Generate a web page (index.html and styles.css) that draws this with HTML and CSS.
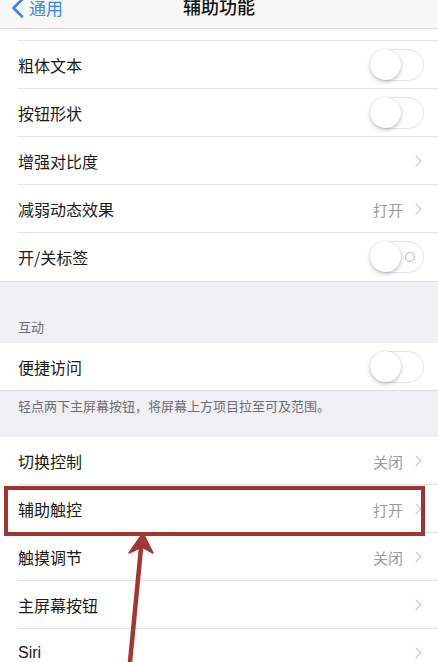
FILE: index.html
```html
<!DOCTYPE html>
<html lang="zh">
<head>
<meta charset="utf-8">
<link rel="stylesheet" href="styles.css">
</head>
<body>
<div class="screen">
  <header class="nav">
    <div class="back">
      <svg class="back-chev" width="13" height="20" viewBox="0 0 13 20"><path d="M11 1.5 L2.5 10 L11 18.5" fill="none" stroke="#3b84f0" stroke-width="2.6" stroke-linecap="round" stroke-linejoin="round"/></svg>
      <span>通用</span>
    </div>
    <div class="title">辅助功能</div>
  </header>

  <section class="group">
    <div class="row stub"></div>
    <div class="row"><span class="label">粗体文本</span><span class="toggle"><span class="knob"></span></span></div>
    <div class="row"><span class="label">按钮形状</span><span class="toggle"><span class="knob"></span></span></div>
    <div class="row"><span class="label">增强对比度</span><span class="chev"></span></div>
    <div class="row"><span class="label">减弱动态效果</span><span class="value">打开</span><span class="chev"></span></div>
    <div class="row last"><span class="label">开/关标签</span><span class="toggle labeled"><span class="knob"></span><span class="ring"></span></span></div>
  </section>

  <div class="sec-head">互动</div>
  <section class="group">
    <div class="row single last"><span class="label">便捷访问</span><span class="toggle"><span class="knob"></span></span></div>
  </section>
  <div class="sec-foot">轻点两下主屏幕按钮，将屏幕上方项目拉至可及范围。</div>

  <section class="group">
    <div class="row"><span class="label">切换控制</span><span class="value">关闭</span><span class="chev"></span></div>
    <div class="row"><span class="label">辅助触控</span><span class="value">打开</span><span class="chev"></span></div>
    <div class="row"><span class="label">触摸调节</span><span class="value">关闭</span><span class="chev"></span></div>
    <div class="row"><span class="label">主屏幕按钮</span><span class="chev"></span></div>
    <div class="row last"><span class="label latin">Siri</span><span class="chev"></span></div>
  </section>

  <div class="highlight"></div>
  <svg class="arrow" width="50" height="140" viewBox="0 0 50 140">
    <path d="M10 132 L21 18" stroke="#a23833" stroke-width="4.5" stroke-linecap="round" fill="none"/>
    <path d="M23 3 L33 23 L22 17 L9 23 Z" fill="#a23833" stroke="#a23833" stroke-width="1.5" stroke-linejoin="round"/>
  </svg>
</div>
</body>
</html>
```
FILE: styles.css
```css
* { box-sizing: border-box; }
html, body { margin: 0; padding: 0; }
body {
  background: #efeff4;
  font-family: "Noto Sans CJK SC", "Noto Sans", sans-serif;
  color: #111;
}
.screen {
  position: relative;
  width: 438px;
  height: 662px;
  overflow: hidden;
  background: #efeff4;
}
.nav {
  height: 29px;
  background: #f7f7f8;
  border-bottom: 1px solid #d9d9dc;
  display: flex;
  align-items: flex-start;
  position: relative;
}
.back {
  display: flex;
  align-items: center;
  gap: 5px;
  color: #3b84f0;
  font-size: 17px;
  line-height: 18px;
  margin-top: -3px;
  padding-left: 11px;
}
.back-chev { margin-top: 1px; }
.title {
  position: absolute;
  left: 0; right: 0;
  top: -5px;
  text-align: center;
  font-size: 18px;
  line-height: 22px;
  color: #111;
  font-weight: 500;
}
.group {
  background: #fff;
  border-bottom: 1px solid #dcdce0;
}
.row {
  height: 48px;
  display: flex;
  align-items: center;
  padding: 0 14px 0 18px;
  position: relative;
}
.row.single { height: 47px; }
.row::after {
  content: "";
  position: absolute;
  left: 18px; right: 0; bottom: 0;
  height: 1px;
  background: #e2e2e6;
}
.row.last::after { display: none; }
.row.stub { height: 12px; }
.label {
  flex: 1;
  font-size: 16px;
  color: #1a1a1a;
}
.label.latin { font-family: "Liberation Sans", "Noto Sans", sans-serif; font-size: 16px; }
.value {
  font-size: 15px;
  color: #9a9a9f;
  margin-right: 9px;
}
.chev {
  width: 8px; height: 8px;
  border-top: 1.6px solid #c4c4c9;
  border-right: 1.6px solid #c4c4c9;
  transform: rotate(45deg);
  margin-right: 4px;
}
.toggle {
  position: relative;
  width: 54px;
  height: 32px;
  border-radius: 16px;
  border: 1.5px solid #e4e4e8;
  background: #fff;
}
.knob {
  position: absolute;
  left: -1px; top: -1px;
  width: 31px; height: 31px;
  border-radius: 50%;
  background: #fff;
  box-shadow: 0 2px 4px rgba(0,0,0,0.22), 0 0 0 0.5px rgba(0,0,0,0.08);
}
.ring {
  position: absolute;
  right: 8px; top: 10px;
  width: 10px; height: 10px;
  border-radius: 50%;
  border: 1.5px solid #b8b8bd;
}
.sec-head {
  height: 61px;
  padding: 0 18px 7px;
  display: flex;
  align-items: flex-end;
  font-size: 13px;
  color: #6d6d72;
}
.sec-foot {
  height: 46px;
  padding: 5px 18px 0;
  font-size: 13px;
  color: #6d6d72;
}
.highlight {
  position: absolute;
  left: 4px; top: 486px;
  width: 421px; height: 50px;
  border: 4px solid #a3332f;
}
.arrow {
  position: absolute;
  left: 120px; top: 530px;
}
```
